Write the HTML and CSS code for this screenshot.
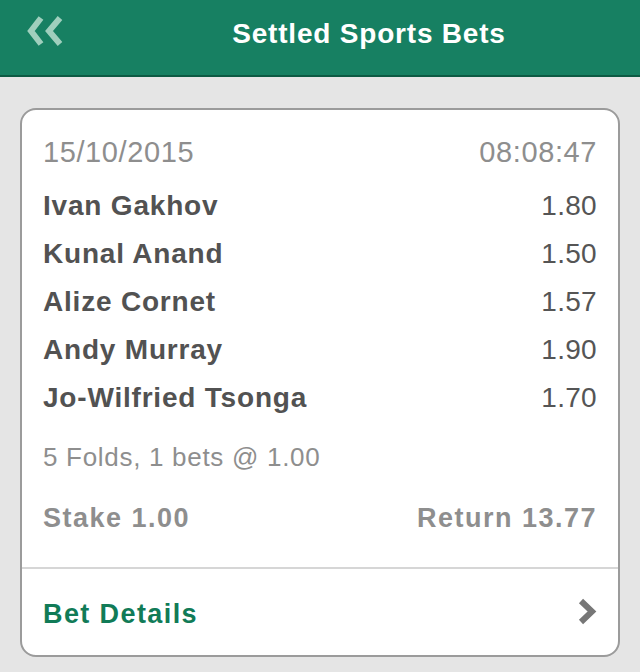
FILE: index.html
```html
<html>
    <head>
        <meta charset="utf-8">
        <link rel="stylesheet" href="styles.css">
    </head>
    <body>
        <div class="topbar">
            <a class="back" href="#">
                <svg width="40" height="32" viewBox="0 0 40 32">
                    <polyline points="15,2 5,15 15,28" />
                    <polyline points="34,2 23,15 34,28" />
                </svg>
            </a>
            <div class="title">Settled Sports Bets</div>
        </div>

        <div class="content">
            <div class="bet-card">
                <div class="bet-body">
                    <div class="row date-row">
                        <span>15/10/2015</span>
                        <span>08:08:47</span>
                    </div>
                    <div class="selections">
                        <div class="row sel"><span class="name">Ivan Gakhov</span><span class="odds">1.80</span></div>
                        <div class="row sel"><span class="name">Kunal Anand</span><span class="odds">1.50</span></div>
                        <div class="row sel"><span class="name">Alize Cornet</span><span class="odds">1.57</span></div>
                        <div class="row sel"><span class="name">Andy Murray</span><span class="odds">1.90</span></div>
                        <div class="row sel"><span class="name">Jo-Wilfried Tsonga</span><span class="odds">1.70</span></div>
                    </div>
                    <div class="row folds">5 Folds, 1 bets @ 1.00</div>
                    <div class="row totals">
                        <span>Stake 1.00</span>
                        <span>Return 13.77</span>
                    </div>
                </div>
                <a class="details" href="#">
                    <span class="details-label">Bet Details</span>
                    <svg class="chev" width="22" height="28" viewBox="0 0 22 28">
                        <polyline points="5,3 16,13.5 5,24" />
                    </svg>
                </a>
            </div>
        </div>
    </body>
</html>
```

FILE: styles.css
```css
html, body {
    margin: 0;
    padding: 0;
}
body {
    width: 640px;
    height: 672px;
    background: #e5e5e5;
    font-family: "Liberation Sans", Arial, Helvetica, sans-serif;
    overflow: hidden;
}

/* header */
.topbar {
    height: 75px;
    background: #178062;
    border-bottom: 2px solid #0d5a43;
    display: flex;
    align-items: flex-start;
}
.back {
    width: 98px;
    padding: 16px 0 0 26px;
    box-sizing: border-box;
    display: block;
}
.back svg polyline {
    fill: none;
    stroke: #9fcfbd;
    stroke-width: 6;
    stroke-linecap: butt;
    stroke-linejoin: miter;
}
.title {
    flex: 1;
    text-align: center;
    color: #fff;
    font-size: 28px;
    font-weight: bold;
    letter-spacing: 0.8px;
    line-height: 32px;
    padding-top: 18px;
}

/* card */
.content {
    padding: 31px 20px 0 20px;
}
.bet-card {
    background: #fff;
    border: 2px solid #9b9b9b;
    border-radius: 16px;
    overflow: hidden;
}
.bet-body {
    padding: 18px 21px 25px 21px;
    border-bottom: 2px solid #d6d6d6;
}
.row {
    display: flex;
    justify-content: space-between;
    align-items: center;
    height: 48px;
}
.date-row {
    color: #8e8e8e;
    font-size: 29px;
    letter-spacing: 0.6px;
    margin-bottom: 6px;
}
.sel .name {
    color: #525252;
    font-size: 28px;
    font-weight: bold;
    letter-spacing: 0.8px;
}
.sel .odds {
    color: #555;
    font-size: 28px;
    letter-spacing: 0.3px;
}
.folds {
    color: #8e8e8e;
    font-size: 26px;
    letter-spacing: 0.7px;
    margin-top: 11px;
}
.totals {
    color: #8e8e8e;
    font-size: 27px;
    font-weight: bold;
    letter-spacing: 1.5px;
    margin-top: 13px;
}

/* footer link */
.details {
    display: flex;
    justify-content: space-between;
    align-items: center;
    height: 86px;
    padding: 0 20px 0 21px;
    text-decoration: none;
    color: #117b57;
    font-size: 27px;
    font-weight: bold;
    letter-spacing: 1.4px;
}
.details-label {
    padding-top: 4px;
}
.chev {
    filter: blur(0.6px);
}
.chev polyline {
    fill: none;
    stroke: #777;
    stroke-width: 6;
    stroke-linecap: butt;
}
```
